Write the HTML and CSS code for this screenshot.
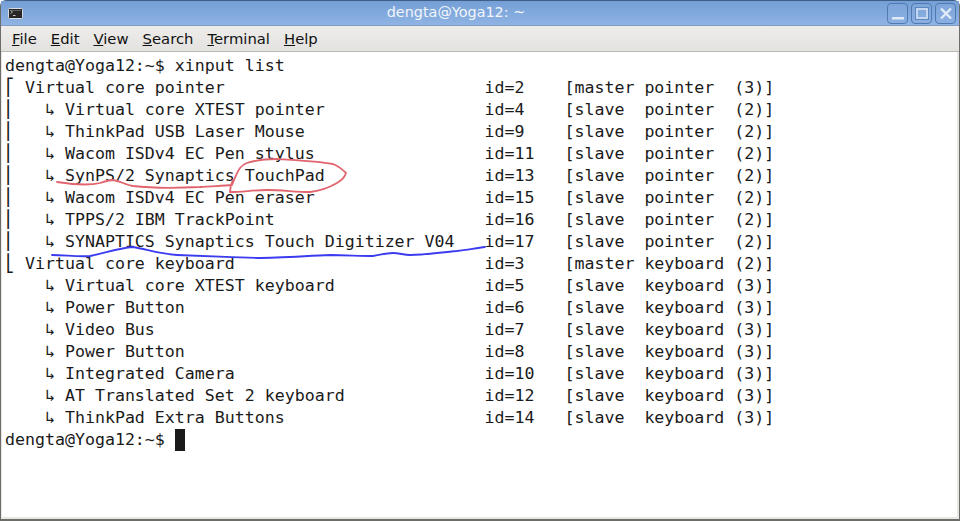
FILE: index.html
```html
<!DOCTYPE html>
<html lang="en">
<head>
<meta charset="utf-8">
<title>dengta@Yoga12: ~</title>
<link rel="stylesheet" href="styles.css">
</head>
<body>
<div class="window">
  <header class="titlebar">
    <svg class="app-icon" width="15" height="11" viewBox="0 0 15 11">
      <rect x="0.5" y="0.5" width="14" height="10" rx="1" fill="#262626" stroke="#d8dce0"/>
      <path d="M2 2.500h11" stroke="#5c5c5c"/>
      <path d="M2.500 2.500l2 1.500-2 1.500" fill="none" stroke="#cfcfcf" stroke-width="0.800"/>
      <path d="M5 7.500h2.500" stroke="#cfcfcf"/>
    </svg>
    <span class="title">dengta@Yoga12: ~</span>
    <div class="controls">
      <button class="ctl" aria-label="Minimize"><svg width="18" height="19" viewBox="0 0 18 19"><rect x="3" y="13" width="12" height="2.500" fill="#dfe9f7"/></svg></button>
      <button class="ctl" aria-label="Maximize"><svg width="18" height="19" viewBox="0 0 18 19"><rect x="4" y="5" width="10" height="9" fill="none" stroke="#d5e2f4" stroke-width="1.600"/><rect x="2.500" y="3.500" width="13" height="12" fill="none" stroke="#5c87bf"/></svg></button>
      <button class="ctl" aria-label="Close"><svg width="18" height="19" viewBox="0 0 18 19"><path d="M4 4.500l10 10M14 4.500l-10 10" stroke="#e2ebf8" stroke-width="2.400"/></svg></button>
    </div>
  </header>
  <nav class="menubar">
    <span class="menu"><u>F</u>ile</span>
    <span class="menu"><u>E</u>dit</span>
    <span class="menu"><u>V</u>iew</span>
    <span class="menu"><u>S</u>earch</span>
    <span class="menu"><u>T</u>erminal</span>
    <span class="menu"><u>H</u>elp</span>
  </nav>
  <main class="terminal">
<pre class="output">dengta@Yoga12:~$ xinput list
⎡ Virtual core pointer                          id=2    [master pointer  (3)]
⎜   ↳ Virtual core XTEST pointer                id=4    [slave  pointer  (2)]
⎜   ↳ ThinkPad USB Laser Mouse                  id=9    [slave  pointer  (2)]
⎜   ↳ Wacom ISDv4 EC Pen stylus                 id=11   [slave  pointer  (2)]
⎜   ↳ SynPS/2 Synaptics TouchPad                id=13   [slave  pointer  (2)]
⎜   ↳ Wacom ISDv4 EC Pen eraser                 id=15   [slave  pointer  (2)]
⎜   ↳ TPPS/2 IBM TrackPoint                     id=16   [slave  pointer  (2)]
⎜   ↳ SYNAPTICS Synaptics Touch Digitizer V04   id=17   [slave  pointer  (2)]
⎣ Virtual core keyboard                         id=3    [master keyboard (2)]
    ↳ Virtual core XTEST keyboard               id=5    [slave  keyboard (3)]
    ↳ Power Button                              id=6    [slave  keyboard (3)]
    ↳ Video Bus                                 id=7    [slave  keyboard (3)]
    ↳ Power Button                              id=8    [slave  keyboard (3)]
    ↳ Integrated Camera                         id=10   [slave  keyboard (3)]
    ↳ AT Translated Set 2 keyboard              id=12   [slave  keyboard (3)]
    ↳ ThinkPad Extra Buttons                    id=14   [slave  keyboard (3)]
dengta@Yoga12:~$ <span class="cursor"></span></pre>
  </main>
</div>
<svg class="ink" width="960" height="521" viewBox="0 0 960 521">
  <path class="red" d="M57 182C70 184 88 186 100 183C106 181 110 180 113 180C120 181 126 185 133 186C150 188 180 188 200 187C212 186 222 186 232 185C235 178 237 172 240 168C242 165 244 164 247 163C256 160 267 159 277 159C296 160 316 161 333 164C338 166 343 170 346 173C345 177 342 180 337 183C330 187 320 191 310 192C296 192 282 190 267 190C254 190 242 192 230 192C230 188 231 184 233 180"/>
  <path class="blue" d="M52 255C65 255 78 257 90 256C102 254 118 248 133 247C146 249 160 254 177 255C200 256 230 257 257 258C280 258 305 256 330 255C345 255 360 256 373 256C380 255 386 253 393 253C399 253 404 255 410 255C426 255 442 252 457 251C467 250 476 248 485 247"/>
</svg>
</body>
</html>
```
FILE: styles.css
```css
html, body {
  margin: 0;
  padding: 0;
  width: 960px;
  height: 521px;
  overflow: hidden;
  background: #fff;
}
.window {
  box-sizing: border-box;
  width: 960px;
  height: 521px;
  display: flex;
  flex-direction: column;
  background: #e8e7e4;
  border-radius: 6px 6px 0 0;
  border: 1px solid #6c6c68;
  border-top-color: #3f6086;
  border-bottom-width: 2px;
}
.titlebar {
  flex: none;
  height: 25px;
  display: flex;
  align-items: center;
  position: relative;
  padding: 0 3px 0 7px;
  background: linear-gradient(#749fd6, #8fb3e4);
  border-bottom: 1px solid #7f9dc4;
  box-sizing: border-box;
}
.app-icon { flex: none; }
.title {
  position: absolute;
  left: 0;
  right: 48px;
  top: 3px;
  text-align: center;
  color: #f2f5f9;
  font: 14.4px "DejaVu Sans", sans-serif;
}
.controls {
  margin-left: auto;
  display: flex;
  gap: 3px;
}
.ctl {
  width: 21px;
  height: 21px;
  padding: 0;
  display: flex;
  align-items: center;
  justify-content: center;
  background: linear-gradient(#7ea6da, #8bafe1);
  border: 1px solid #4f79b0;
  border-radius: 4px;
}
.menubar {
  flex: none;
  height: 26px;
  box-sizing: border-box;
  display: flex;
  align-items: center;
  gap: 14px;
  padding: 0 11px;
  background: linear-gradient(#eeedeb, #e3e2df);
  border-bottom: 1px solid #b9b8b4;
  font: 14.8px "DejaVu Sans", sans-serif;
  color: #111;
}
.terminal {
  flex: 1;
  min-height: 0;
  margin: 0 2px 2px 1px;
  padding: 3px 0 0 3px;
  background: #fff;
}
.output {
  margin: 0;
  font: 16.6px/22px "DejaVu Sans Mono", monospace;
  color: #1a1a1a;
}
.cursor {
  display: inline-block;
  width: 10px;
  height: 22px;
  vertical-align: -6px;
  background: #1a1a1a;
}
.ink {
  position: absolute;
  left: 0;
  top: 0;
  pointer-events: none;
}
.ink path {
  fill: none;
  stroke-width: 1.800;
  stroke-linecap: round;
  stroke-linejoin: round;
}
.red { stroke: #e0656e; }
.blue { stroke: #3b3bf0; }
```
